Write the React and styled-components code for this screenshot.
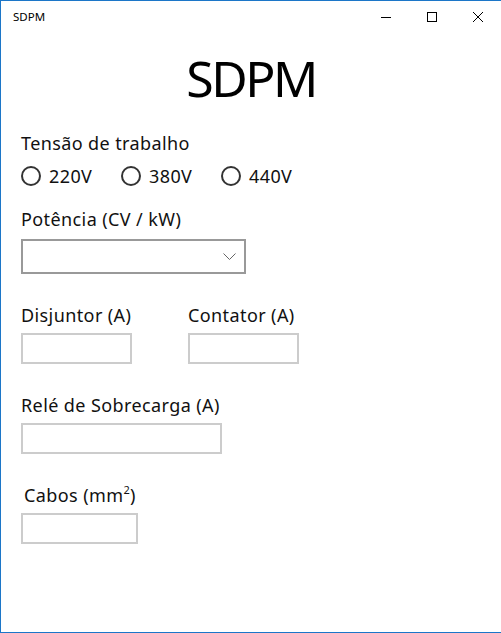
import React from "react";
import styled, { createGlobalStyle } from "styled-components";

const Global = createGlobalStyle`
  html, body { margin: 0; padding: 0; background: #fff; }
  body { font-family: "Noto Sans", "Open Sans", sans-serif; color: #000; }
  * { box-sizing: border-box; }
`;

const Window = styled.div`
  width: 501px;
  height: 633px;
  border-top: 1px solid #1c76c8;
  border-left: 1px solid #1c76c8;
  border-bottom: 1px solid #1c76c8;
  display: flex;
  flex-direction: column;
  background: #fff;
  overflow: hidden;
`;

const TitleBar = styled.div`
  height: 31px;
  display: flex;
  align-items: center;
  flex-shrink: 0;
`;

const TitleText = styled.div`
  flex: 1;
  padding-left: 12px;
  font-size: 11.5px;
  line-height: 31px;
  color: #000;
`;

const CtrlButton = styled.div`
  width: 46px;
  height: 31px;
  display: flex;
  align-items: center;
  justify-content: center;
`;

const Content = styled.div`
  padding: 0 20px;
  display: flex;
  flex-direction: column;
  align-items: flex-start;
`;

const Heading = styled.h1`
  align-self: stretch;
  margin: 21px 0 0 0;
  font-weight: 400;
  font-size: 50px;
  line-height: 50px;
  text-align: center;
  letter-spacing: -2.5px;
`;

const Label = styled.div`
  font-size: 18px;
  line-height: 24px;
  letter-spacing: 0.4px;
  color: #111;
  margin-top: ${(p) => p.$mt || 0}px;
  margin-left: ${(p) => p.$ml || 0}px;
  white-space: nowrap;
`;

const Sup = styled.sup`
  font-size: 11px;
  line-height: 0;
  vertical-align: 0;
  position: relative;
  top: -8px;
`;

const RadioRow = styled.div`
  margin-top: 9px;
  display: flex;
`;

const RadioItem = styled.label`
  width: 100px;
  display: flex;
  align-items: center;
  gap: 8px;
  font-size: 18px;
  line-height: 24px;
  letter-spacing: 0.4px;
  color: #111;
`;

const RadioCircle = styled.span`
  width: 20px;
  height: 20px;
  border-radius: 50%;
  border: 2px solid #333;
  flex-shrink: 0;
`;

const Combo = styled.div`
  margin-top: 8px;
  width: 225px;
  height: 35px;
  border: 2px solid #999;
  display: flex;
  align-items: center;
  justify-content: flex-end;
  padding-right: 8px;
`;

const FieldRow = styled.div`
  display: flex;
  gap: 56px;
`;

const Field = styled.div`
  display: flex;
  flex-direction: column;
  align-items: flex-start;
  margin-top: ${(p) => p.$mt || 0}px;
`;

const TextBox = styled.div`
  margin-top: 6px;
  width: ${(p) => p.$w}px;
  height: 31px;
  border: 2px solid #ccc;
`;

export default function App() {
  return (
    <>
      <Global />
      <Window>
        <TitleBar>
          <TitleText>SDPM</TitleText>
          <CtrlButton>
            <svg width="10" height="10" viewBox="0 0 10 10">
              <line x1="0" y1="5.5" x2="10" y2="5.5" stroke="#000" strokeWidth="1" />
            </svg>
          </CtrlButton>
          <CtrlButton>
            <svg width="10" height="10" viewBox="0 0 10 10">
              <rect x="0.5" y="0.5" width="9" height="9" fill="none" stroke="#000" strokeWidth="1" />
            </svg>
          </CtrlButton>
          <CtrlButton>
            <svg width="10" height="10" viewBox="0 0 10 10">
              <path d="M0 0 L10 10 M10 0 L0 10" stroke="#000" strokeWidth="1" />
            </svg>
          </CtrlButton>
        </TitleBar>
        <Content>
          <Heading>SDPM</Heading>
          <Label $mt={28}>Tensão de trabalho</Label>
          <RadioRow>
            <RadioItem><RadioCircle />220V</RadioItem>
            <RadioItem><RadioCircle />380V</RadioItem>
            <RadioItem><RadioCircle />440V</RadioItem>
          </RadioRow>
          <Label $mt={19}>Potência (CV / kW)</Label>
          <Combo>
            <svg width="13" height="7" viewBox="0 0 13 7">
              <path d="M0.5 0.5 L6.5 6.5 L12.5 0.5" fill="none" stroke="#666" strokeWidth="1" />
            </svg>
          </Combo>
          <FieldRow>
            <Field $mt={29}>
              <Label>Disjuntor (A)</Label>
              <TextBox $w={111} />
            </Field>
            <Field $mt={29}>
              <Label>Contator (A)</Label>
              <TextBox $w={111} />
            </Field>
          </FieldRow>
          <Field $mt={29}>
            <Label>Relé de Sobrecarga (A)</Label>
            <TextBox $w={201} />
          </Field>
          <Field $mt={29}>
            <Label $ml={3}>Cabos (mm<Sup>2</Sup>)</Label>
            <TextBox $w={117} />
          </Field>
        </Content>
      </Window>
    </>
  );
}
